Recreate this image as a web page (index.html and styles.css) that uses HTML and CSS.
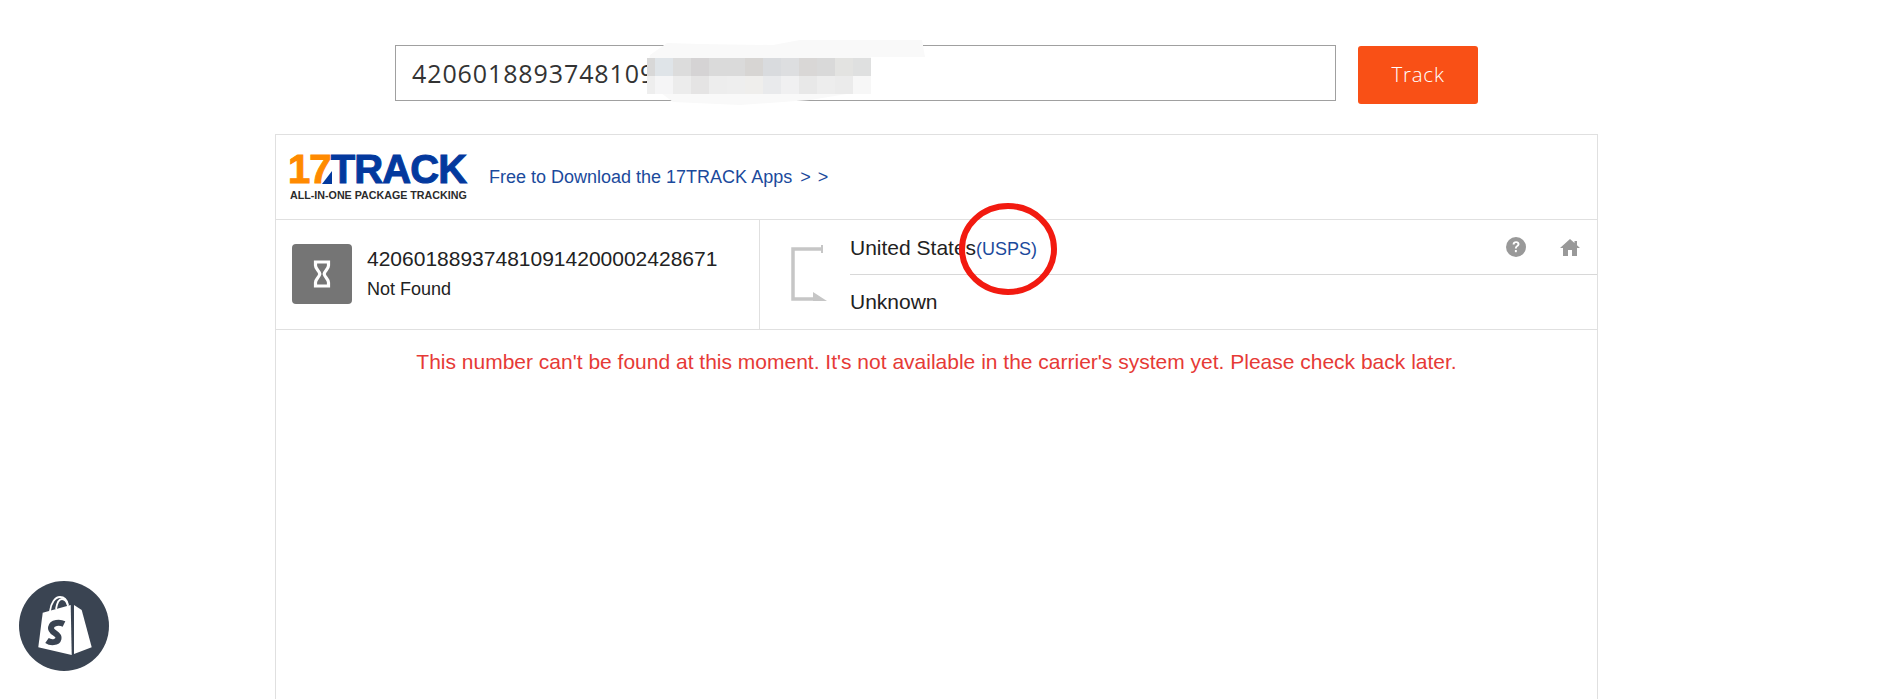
FILE: index.html
```html
<!DOCTYPE html>
<html lang="en">
<head>
    <meta charset="UTF-8">
    <meta name="viewport" content="width=device-width, initial-scale=1.0">
    <title>17TRACK - Track</title>
    <link rel="stylesheet" href="styles.css">
</head>
<body>
    <div class="page">
        <div class="search-row">
            <div class="search-box">
                <span class="search-value">420601889374810914200002428671</span>
                <div class="smudge"></div>
                <div class="mosaic"></div>
            </div>
            <button class="track-button">Track</button>
        </div>

        <div class="panel">
            <div class="panel-head">
                <div class="logo">
                    <div class="logo-mark"><span class="logo-17">17</span><span class="logo-track">TRACK</span><i class="logo-cut"></i></div>
                    <div class="logo-tag">ALL-IN-ONE PACKAGE TRACKING</div>
                </div>
                <a class="apps-link" href="#">Free to Download the 17TRACK Apps <span class="apps-arrows">&gt; &gt;</span></a>
            </div>

            <div class="result-row">
                <div class="result-left">
                    <div class="status-icon">
                        <svg width="18" height="28" viewBox="0 0 18 28" fill="none" stroke="#fff" stroke-width="3.200">
                            <path d="M2.500 2h13v3.500c0 3.500-3.700 5-4.300 8.500 .6 3.500 4.300 5 4.300 8.500V26h-13v-3.500c0-3.500 3.700-5 4.300-8.500-.6-3.500-4.300-5-4.300-8.500z"/>
                        </svg>
                    </div>
                    <div class="tracking">
                        <div class="tracking-number">420601889374810914200002428671</div>
                        <div class="tracking-status">Not Found</div>
                    </div>
                </div>
                <div class="result-right">
                    <div class="route-icon">
                        <svg width="36" height="60" viewBox="0 0 36 60" fill="none">
                            <path d="M31 5H2v50h22" stroke="#c6c6c6" stroke-width="3.500"/>
                            <path d="M31 1v8" stroke="#c6c6c6" stroke-width="2"/>
                            <path d="M22 48l14 9H22z" fill="#c6c6c6"/>
                        </svg>
                    </div>
                    <div class="route">
                        <div class="route-line route-from">
                            <span class="route-name">United States<a class="carrier" href="#">(USPS)</a></span>
                            <div class="route-actions">
                                <svg width="22" height="22" viewBox="0 0 22 22">
                                    <circle cx="11" cy="11" r="10" fill="#999"/>
                                    <path d="M7.600 8.400c0-2 1.500-3.200 3.500-3.200s3.400 1.100 3.400 2.900c0 2.400-2.700 2.500-2.700 4.500H9.900c0-3 2.600-3 2.600-4.400 0-.7-.6-1.200-1.400-1.200-.9 0-1.500.6-1.500 1.400z" fill="#fff"/>
                                    <rect x="9.900" y="14" width="1.900" height="2.200" fill="#fff"/>
                                </svg>
                                <svg width="22" height="20" viewBox="0 0 22 20">
                                    <path d="M11 2L1 11h3v8h5v-6h4v6h5v-8h3l-3-2.700V4h-2.500v2.100z" fill="#999"/>
                                </svg>
                            </div>
                        </div>
                        <div class="route-line route-to">Unknown</div>
                    </div>
                </div>
            </div>

            <p class="notice">This number can't be found at this moment. It's not available in the carrier's system yet. Please check back later.</p>
        </div>
    </div>

    <!-- annotation on top of the screenshot -->
    <svg class="red-ring" width="100" height="96" viewBox="0 0 100 96" fill="none">
        <ellipse cx="50" cy="48" rx="46" ry="43" stroke="#f21a10" stroke-width="6"/>
    </svg>

    <div class="shopify-badge">
        <svg width="90" height="90" viewBox="0 0 90 90">
            <path d="M31 30c1-8 5-14 10-14 4 0 7 3 8 8" fill="none" stroke="#fff" stroke-width="1.800"/>
            <path d="M37 28c1-6 3-10 6-10 3 0 5 3 6 7" fill="none" stroke="#fff" stroke-width="1.800"/>
            <path d="M23.700 31.700L51.700 24 52.700 74 19.300 66.300z" fill="#fff"/>
            <path d="M55 24l7.700 5 10 37.300L55 73z" fill="#fff"/>
            <path d="M45 43c-4-2-12-2-13 3.500-1 5.500 8.500 5.500 7.500 11-1 4.500-8 4.500-11.500 2" fill="none" stroke="#3a4452" stroke-width="6"/>
        </svg>
    </div>
</body>
</html>
```
FILE: styles.css
```css
* {
    margin: 0;
    padding: 0;
    box-sizing: border-box;
}

html, body {
    height: 100%;
    overflow: hidden;
}

body {
    font-family: 'Liberation Sans', Arial, sans-serif;
    background: #fff;
    color: #222;
}

a {
    color: #1b4a9c;
    text-decoration: none;
}

.page {
    width: 1323px;
    margin-left: 275px;
    padding-top: 45px;
}

.search-row {
    display: flex;
    align-items: flex-start;
    gap: 23px;
    padding-left: 120px;
    margin-bottom: 30px;
}

.search-box {
    position: relative;
    width: 941px;
    height: 56px;
    border: 1px solid #a0a0a0;
    padding-left: 16px;
    display: flex;
    align-items: center;
}

.search-value {
    font-family: 'Open Sans', sans-serif;
    font-size: 25px;
    letter-spacing: 0.9px;
    color: #333;
}

.smudge {
    position: absolute;
    left: 247px;
    top: -6px;
    width: 290px;
    height: 66px;
    background: #f9f9f9;
    clip-path: polygon(24px 3px, 57px 4px, 130px 5px, 157px 0, 279px 0, 282px 17px, 228px 17px, 228px 50px, 167px 60px, 97px 65px, 30px 62px, 10px 47px, 4px 30px, 7px 15px);
}

.mosaic {
    position: absolute;
    left: 251px;
    top: 12px;
    width: 224px;
    height: 36px;
    background:
        linear-gradient(90deg, #d8d8d8 0 8px, #dfe4e8 8px 26px, #dcdcdc 26px 44px, #d5d3d4 44px 62px, #dadada 62px 98px, #d7d5d3 98px 116px, #d9dbde 116px 134px, #dddee0 134px 152px, #d9d7d6 152px 170px, #d9d9d9 170px 188px, #e3e3e1 188px 206px, #dfe0e0 206px 224px) top / 100% 50% no-repeat,
        linear-gradient(90deg, #eeeeee 0 8px, #f5f5f6 8px 26px, #ececec 26px 44px, #e5e4e4 44px 62px, #ededed 62px 80px, #eeeeee 80px 98px, #efeeec 98px 116px, #e9eaec 116px 134px, #f0f0f1 134px 152px, #e8e8e8 152px 170px, #ededed 170px 188px, #ebebeb 188px 206px, #f7f7f7 206px 224px) bottom / 100% 50% no-repeat;
}

.track-button {
    width: 120px;
    height: 58px;
    margin: 1px 0 0 -1px;
    padding-bottom: 2px;
    border: none;
    border-radius: 3px;
    background: #f95016;
    color: #fff;
    font-family: 'Open Sans', sans-serif;
    font-weight: 300;
    font-size: 20.5px;
    letter-spacing: 0.8px;
}

.panel {
    height: 700px;
    border: 1px solid #e0e0e0;
}

.panel-head {
    height: 85px;
    display: flex;
    align-items: center;
    gap: 21px;
    padding-left: 12px;
    border-bottom: 1px solid #e0e0e0;
}

.logo {
    width: 180px;
}

.logo-mark {
    position: relative;
    font-weight: 700;
    font-size: 40px;
    line-height: 33px;
    letter-spacing: -0.9px;
    white-space: nowrap;
    -webkit-text-stroke: 1px;
}

.logo-17 {
    color: #ff8a00;
}

.logo-track {
    color: #03399e;
}

.logo-cut {
    position: absolute;
    left: 34px;
    top: 18px;
    width: 10px;
    height: 13px;
    background: #03399e;
    clip-path: polygon(100% 0, 100% 100%, 0 100%);
}

.logo-tag {
    font-size: 10.7px;
    font-weight: 700;
    color: #2b2b2b;
    white-space: nowrap;
    margin-top: 3px;
    padding-left: 2px;
}

.apps-link {
    font-size: 18px;
}

.apps-arrows {
    margin-left: 3px;
    word-spacing: 2px;
}

.result-row {
    height: 110px;
    display: flex;
    border-bottom: 1px solid #e0e0e0;
}

.result-left {
    width: 484px;
    border-right: 1px solid #e0e0e0;
    display: flex;
    align-items: center;
    gap: 15px;
    padding: 0 0 2px 16px;
}

.status-icon {
    width: 60px;
    height: 60px;
    border-radius: 4px;
    background: #757575;
    display: flex;
    align-items: center;
    justify-content: center;
}

.tracking {
    padding-bottom: 2px;
}

.tracking-number {
    font-size: 21px;
    line-height: 30px;
}

.tracking-status {
    font-size: 18px;
    line-height: 24px;
    margin-top: 3px;
}

.result-right {
    flex: 1;
    display: flex;
}

.route-icon {
    width: 90px;
    padding: 24px 0 0 31px;
}

.route {
    flex: 1;
}

.route-line {
    height: 55px;
    display: flex;
    align-items: center;
    font-size: 21px;
}

.route-from {
    justify-content: space-between;
    border-bottom: 1px solid #d8d8d8;
}

.route-name {
    margin-top: 2px;
}

.route-to {
    padding-bottom: 2px;
}

.carrier {
    font-size: 18px;
}

.route-actions {
    display: flex;
    align-items: center;
    gap: 32px;
    padding-right: 16px;
}

.notice {
    margin-top: 17px;
    text-align: center;
    font-size: 21px;
    line-height: 30px;
    color: #e63a36;
}

.red-ring {
    position: absolute;
    left: 958px;
    top: 201px;
}

.shopify-badge {
    position: fixed;
    left: 19px;
    top: 581px;
    width: 90px;
    height: 90px;
    border-radius: 50%;
    background: #3a4452;
}
```
